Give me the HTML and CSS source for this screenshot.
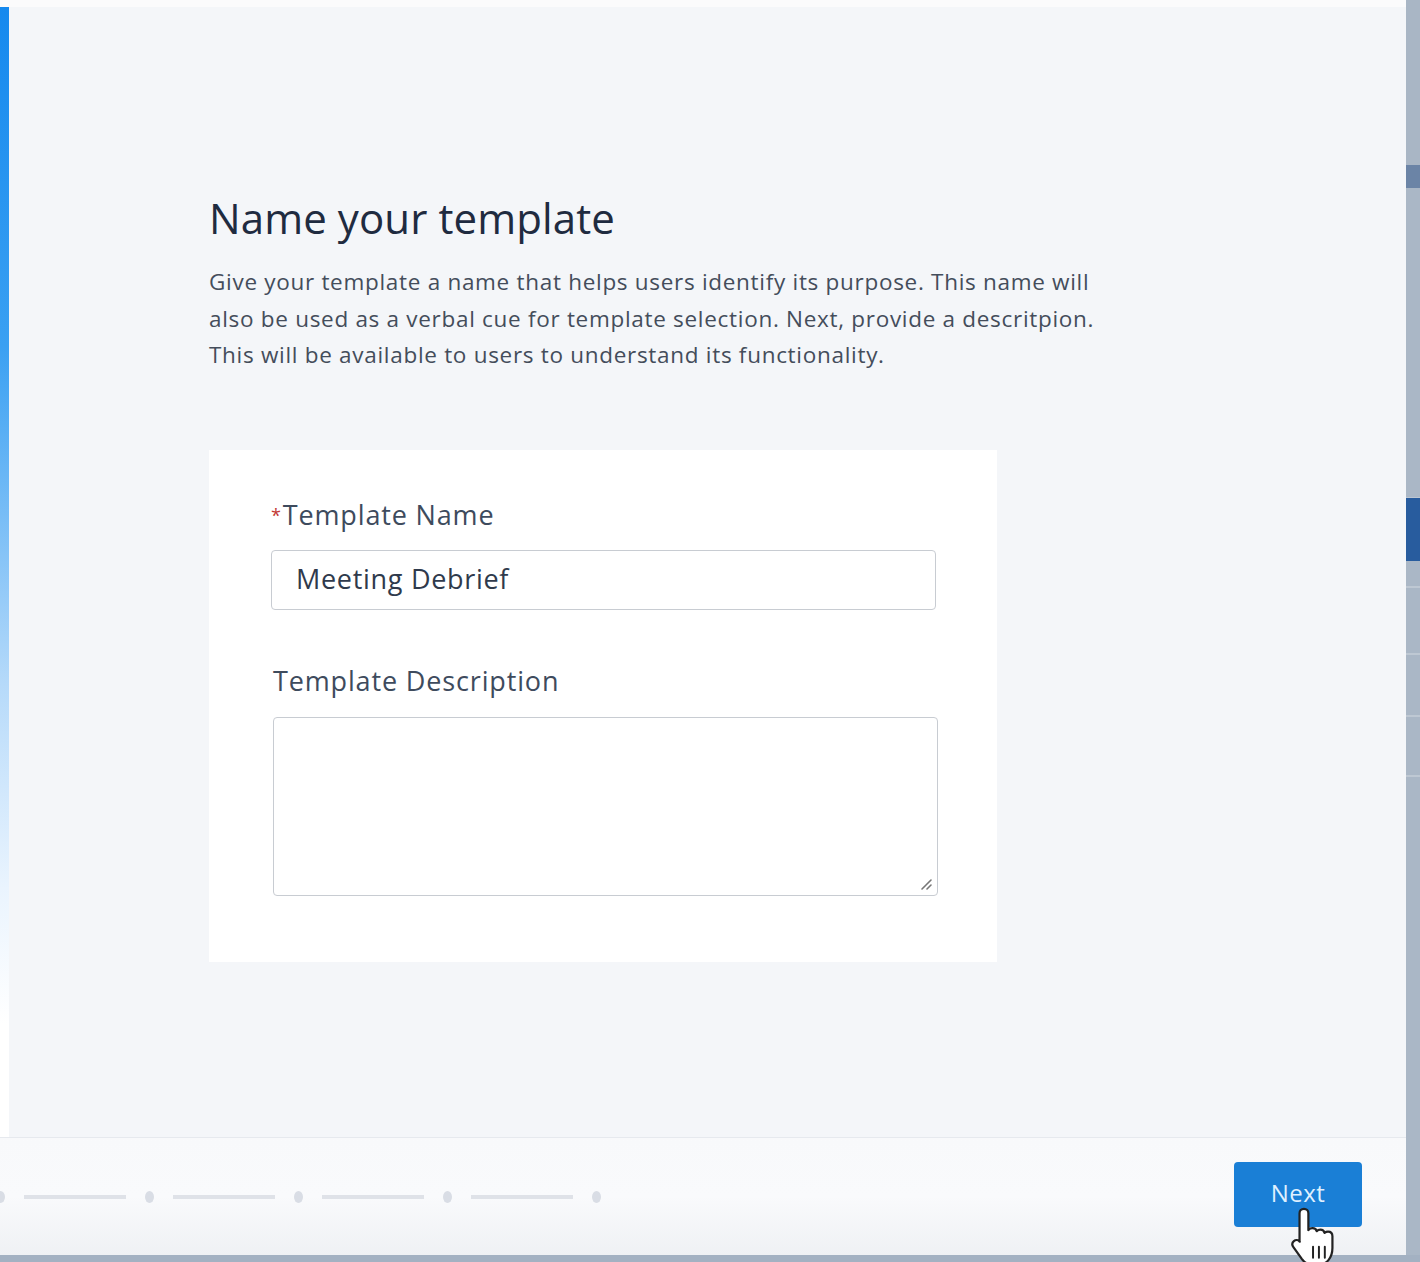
FILE: index.html
```html
<!DOCTYPE html>
<html>
<head>
<meta charset="utf-8">
<link rel="stylesheet" href="styles.css">
</head>
<body>
<div class="app">
  <div class="modal">
    <div class="top-strip"></div>
    <div class="body-row">
      <div class="left-bar"></div>
      <main class="content">
        <h1 class="title">Name your template</h1>
        <p class="desc">Give your template a name that helps users identify its purpose. This name will also be used as a verbal cue for template selection. Next, provide a descritpion. This will be available to users to understand its functionality.</p>
        <div class="card">
          <label class="label"><span class="req">*</span>Template Name</label>
          <div class="input">Meeting Debrief</div>
          <label class="label label-desc">Template Description</label>
          <div class="textarea">
            <svg class="grip" width="12" height="12" viewBox="0 0 12 12"><path d="M2 11 L11 2 M7 11 L11 7" stroke="#777" stroke-width="1.6" stroke-linecap="round"/></svg>
          </div>
        </div>
      </main>
    </div>
    <footer class="footer">
      <div class="progress">
        <span class="dot"></span><span class="line"></span>
        <span class="dot"></span><span class="line"></span>
        <span class="dot"></span><span class="line"></span>
        <span class="dot"></span><span class="line"></span>
        <span class="dot"></span>
      </div>
      <button class="next">Next</button>
      <svg class="cursor" width="54" height="64" viewBox="0 0 22 26">
        <path d="M6.5 1.5 C7.6 1.5 8.3 2.3 8.3 3.3 L8.3 10.2 C8.7 9.6 9.3 9.4 10 9.4 C10.9 9.4 11.5 9.9 11.7 10.6 C12.1 10.2 12.6 10 13.2 10 C14.1 10 14.7 10.6 14.9 11.3 C15.3 11 15.8 10.8 16.3 10.8 C17.4 10.8 18.1 11.6 18.1 12.7 L18.1 17.5 C18.1 21.4 15.8 24.4 12 24.4 L10.3 24.4 C8.3 24.4 6.9 23.6 5.7 22 L2.2 17.1 C1.6 16.3 1.7 15.3 2.4 14.7 C3.1 14.1 4.2 14.2 4.8 14.9 L4.7 14.8 L4.7 3.3 C4.7 2.3 5.4 1.5 6.5 1.5 Z" fill="#fff" stroke="#222" stroke-width="0.9" stroke-linejoin="round"/>
        <path d="M10.2 17 L10.2 21.5 M12.6 17 L12.6 21.5 M15 17 L15 21.5" stroke="#222" stroke-width="0.8" stroke-linecap="round"/>
      </svg>
    </footer>
  </div>
  <div class="right-bar">
    <div class="rb-seg rb-a"></div>
    <div class="rb-seg rb-b"></div>
    <div class="rb-seg rb-c"></div>
    <div class="rb-seg rb-d"></div>
    <div class="rb-seg rb-e"></div>
  </div>
</div>
<div class="bottom-strip"></div>
</body>
</html>
```
FILE: styles.css
```css
* { box-sizing: border-box; }
html, body { margin: 0; padding: 0; }
body {
  width: 1420px;
  height: 1262px;
  overflow: hidden;
  background: #f4f6f9;
  font-family: "Open Sans", "Liberation Sans", sans-serif;
  color: #16325c;
}
.app {
  display: flex;
  height: 1255px;
}
.modal {
  flex: 1;
  display: flex;
  flex-direction: column;
  position: relative;
}
.top-strip {
  height: 7px;
  background: #fbfbfc;
}
.body-row {
  display: flex;
  height: 1130px;
}
.left-bar {
  width: 9px;
  background: linear-gradient(to bottom, #1589ee 0%, #3aa0f2 30%, #b6dafa 60%, #eaf4fe 78%, #ffffff 90%, #ffffff 100%);
}
.content {
  flex: 1;
  background: #f4f6f9;
  padding: 184px 0 0 200px;
}
.title {
  margin: 0;
  font-size: 42px;
  font-weight: 400;
  line-height: 54px;
  color: #1f2b40;
  letter-spacing: 0.1px;
}
.desc {
  margin: 19px 0 0 0;
  width: 910px;
  font-size: 22.5px;
  letter-spacing: 0.7px;
  line-height: 36.5px;
  color: #444d5b;
}
.card {
  margin-top: 76px;
  width: 788px;
  height: 512px;
  background: #ffffff;
  padding: 48px 62px 0 62px;
}
.label {
  display: block;
  font-size: 27px;
  letter-spacing: 0.85px;
  line-height: 34px;
  color: #3e4b5d;
}
.req {
  color: #c23934;
  font-size: 18px;
  vertical-align: top;
  margin-right: 1px;
}
.input {
  margin-top: 18px;
  width: 665px;
  height: 60px;
  border: 1.5px solid #c8ccd2;
  border-radius: 4px;
  padding: 0 0 0 24px;
  font-size: 27px;
  letter-spacing: 0.7px;
  line-height: 56px;
  color: #2f3a4c;
  background: #fff;
}
.label-desc {
  margin-top: 54px;
  margin-left: 2px;
}
.textarea {
  margin-top: 19px;
  margin-left: 2px;
  width: 665px;
  height: 179px;
  border: 1.5px solid #c8ccd2;
  border-radius: 4px;
  background: #fff;
  position: relative;
}
.grip {
  position: absolute;
  right: 5px;
  bottom: 5px;
}
.footer {
  height: 118px;
  border-top: 1px solid #e6e9ee;
  background: linear-gradient(to bottom, #f8f9fb 0%, #f9fafc 50%, #eff1f4 100%);
  display: flex;
  align-items: center;
  justify-content: space-between;
  padding: 0 44px 0 0;
  position: relative;
}
.progress {
  display: flex;
  align-items: center;
  margin-left: -4px;
}
.dot {
  width: 9px;
  height: 12px;
  border-radius: 50%;
  background: #d9dde5;
}
.line {
  width: 102px;
  height: 4px;
  background: #dfe2e8;
  margin: 0 19px;
}
.next {
  width: 128px;
  height: 65px;
  margin-top: -4px;
  border: none;
  border-radius: 4px;
  background: #1a7fd6;
  color: #dff0ff;
  font-family: "Open Sans", "Liberation Sans", sans-serif;
  font-size: 24px;
  letter-spacing: 0.5px;
  padding: 0 0 4px 0;
}
.cursor {
  position: absolute;
  left: 1288px;
  top: 67px;
}
.right-bar {
  width: 14px;
  display: flex;
  flex-direction: column;
  background: #a9b6c6;
}
.rb-seg { width: 100%; }
.rb-a { height: 165px; background: #a9b6c5; }
.rb-b { height: 23px; background: #6b84a6; }
.rb-c { height: 310px; background: #aab7c6; border-bottom: 1px solid #bcc6d2; }
.rb-d { height: 63px; background: #285c9e; }
.rb-e { flex: 1; background: #aab7c6; background-image: linear-gradient(to bottom, transparent 25px, #bec8d3 25px, #bec8d3 27px, transparent 27px, transparent 92px, #bec8d3 92px, #bec8d3 94px, transparent 94px, transparent 154px, #bec8d3 154px, #bec8d3 156px, transparent 156px, transparent 214px, #bec8d3 214px, #bec8d3 216px, transparent 216px); }
.bottom-strip {
  height: 7px;
  background: #a3b1c2;
}
```
